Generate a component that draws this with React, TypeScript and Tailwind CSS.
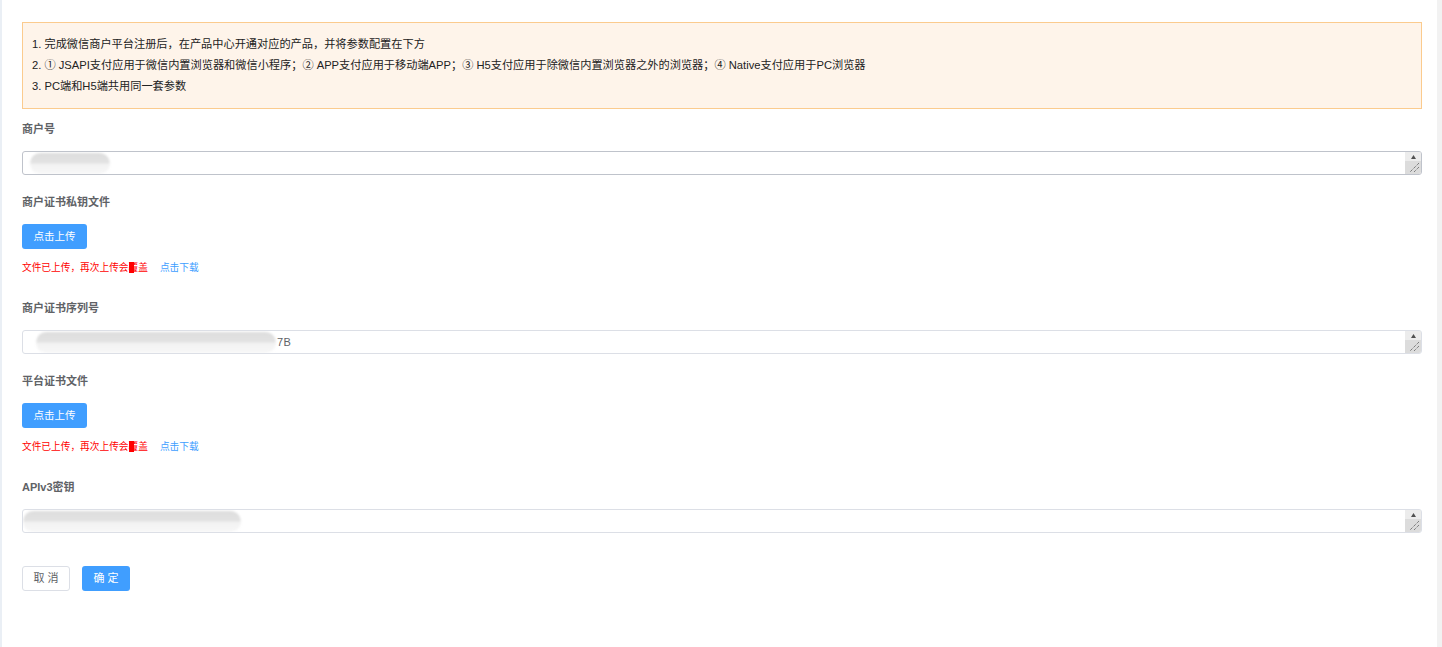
import React from 'react';

const font = { fontFamily: '"Liberation Sans", "Noto Sans CJK SC", sans-serif' };

function FakeScroll() {
  return (
    <div className="flex w-[16px] shrink-0 flex-col bg-[#dcdcdc]">
      <div className="flex h-[9px] items-center justify-center bg-[#ececec]">
        <svg width="5" height="4" viewBox="0 0 5 4">
          <path d="M2.5 0 L5 4 L0 4 Z" fill="#505050" />
        </svg>
      </div>
      <div className="relative flex-1">
        <svg className="absolute bottom-[1px] right-[1px]" width="12" height="12" viewBox="0 0 12 12">
          <path d="M11 2 L2 11 M11 6 L6 11" stroke="#555" strokeWidth="1" strokeDasharray="1 1" />
        </svg>
      </div>
    </div>
  );
}

function Field({ dark, children }: { dark?: boolean; children?: React.ReactNode }) {
  return (
    <div
      className={`mt-[11px] flex h-[24px] overflow-hidden rounded-[3px] border bg-white ${
        dark ? 'border-[#bfc3cb]' : 'border-[#dcdfe6]'
      }`}
    >
      <div className="relative flex flex-1 items-center pl-[10px] text-[11px] text-[#606266]">{children}</div>
      <FakeScroll />
    </div>
  );
}

function Blur({ left, width, tail }: { left: number; width: number; tail?: string }) {
  return (
    <>
      <div
        className="absolute top-[1px] h-[21px] rounded-full bg-[linear-gradient(180deg,#dedede_0%,#e2e2e2_45%,#f3f3f3_55%,#f7f7f7_100%)] blur-[1px]"
        style={{ left, width }}
      />
      {tail && (
        <span className="absolute tracking-[0.5px]" style={{ left: left + width + 1 }}>
          {tail}
        </span>
      )}
    </>
  );
}

function Label({ children, mt }: { children: React.ReactNode; mt: string }) {
  return <div className={`${mt} h-[22px] text-[11px] font-bold leading-[22px] text-[#606266]`}>{children}</div>;
}

function Upload() {
  return (
    <>
      <button
        type="button"
        className="mt-[11px] block h-[25px] w-[65px] rounded-[3px] bg-[#409eff] text-[10.5px] text-white"
      >
        点击上传
      </button>
      <div className="mt-[9px] flex h-[20px] items-center text-[9.7px] leading-[20px]">
        <span className="text-[#ff0000]">
          文件已上传，再次上传会
          <span className="bg-[linear-gradient(90deg,#ff0000_55%,transparent_55%)]">覆</span>盖
        </span>
        <span className="ml-[12px] text-[#409eff]">点击下载</span>
      </div>
    </>
  );
}

export default function App() {
  return (
    <div className="flex min-h-screen bg-[#f2f2f2]" style={font}>
      <div className="w-[2px] shrink-0 bg-[#eaeff5]" />
      <div className="mr-[5px] min-h-screen flex-1 bg-white pl-[20px] pr-[15px] pt-[22px]">
        <div className="h-[87px] border border-[#fbcb8e] bg-[#fef4ea] px-[9px] py-[11px] text-[11.2px] leading-[21px] text-[#222]">
          <p>1. 完成微信商户平台注册后，在产品中心开通对应的产品，并将参数配置在下方</p>
          <p>
            2. ① JSAPI支付应用于微信内置浏览器和微信小程序；② APP支付应用于移动端APP；③
            H5支付应用于除微信内置浏览器之外的浏览器；④ Native支付应用于PC浏览器
          </p>
          <p>3. PC端和H5端共用同一套参数</p>
        </div>

        <Label mt="mt-[9px]">商户号</Label>
        <Field dark>
          <Blur left={7} width={80} />
        </Field>

        <Label mt="mt-[16px]">商户证书私钥文件</Label>
        <Upload />

        <Label mt="mt-[19px]">商户证书序列号</Label>
        <Field>
          <Blur left={13} width={240} tail="7B" />
        </Field>

        <Label mt="mt-[16px]">平台证书文件</Label>
        <Upload />

        <Label mt="mt-[19px]">APIv3密钥</Label>
        <Field>
          <Blur left={0} width={218} />
        </Field>

        <div className="mt-[33px] flex gap-[12px]">
          <button
            type="button"
            className="h-[25px] w-[48px] rounded-[3px] border border-[#dcdfe6] bg-white text-[11px] text-[#606266]"
          >
            取 消
          </button>
          <button type="button" className="h-[25px] w-[48px] rounded-[3px] bg-[#409eff] text-[11px] text-white">
            确 定
          </button>
        </div>
      </div>
    </div>
  );
}
